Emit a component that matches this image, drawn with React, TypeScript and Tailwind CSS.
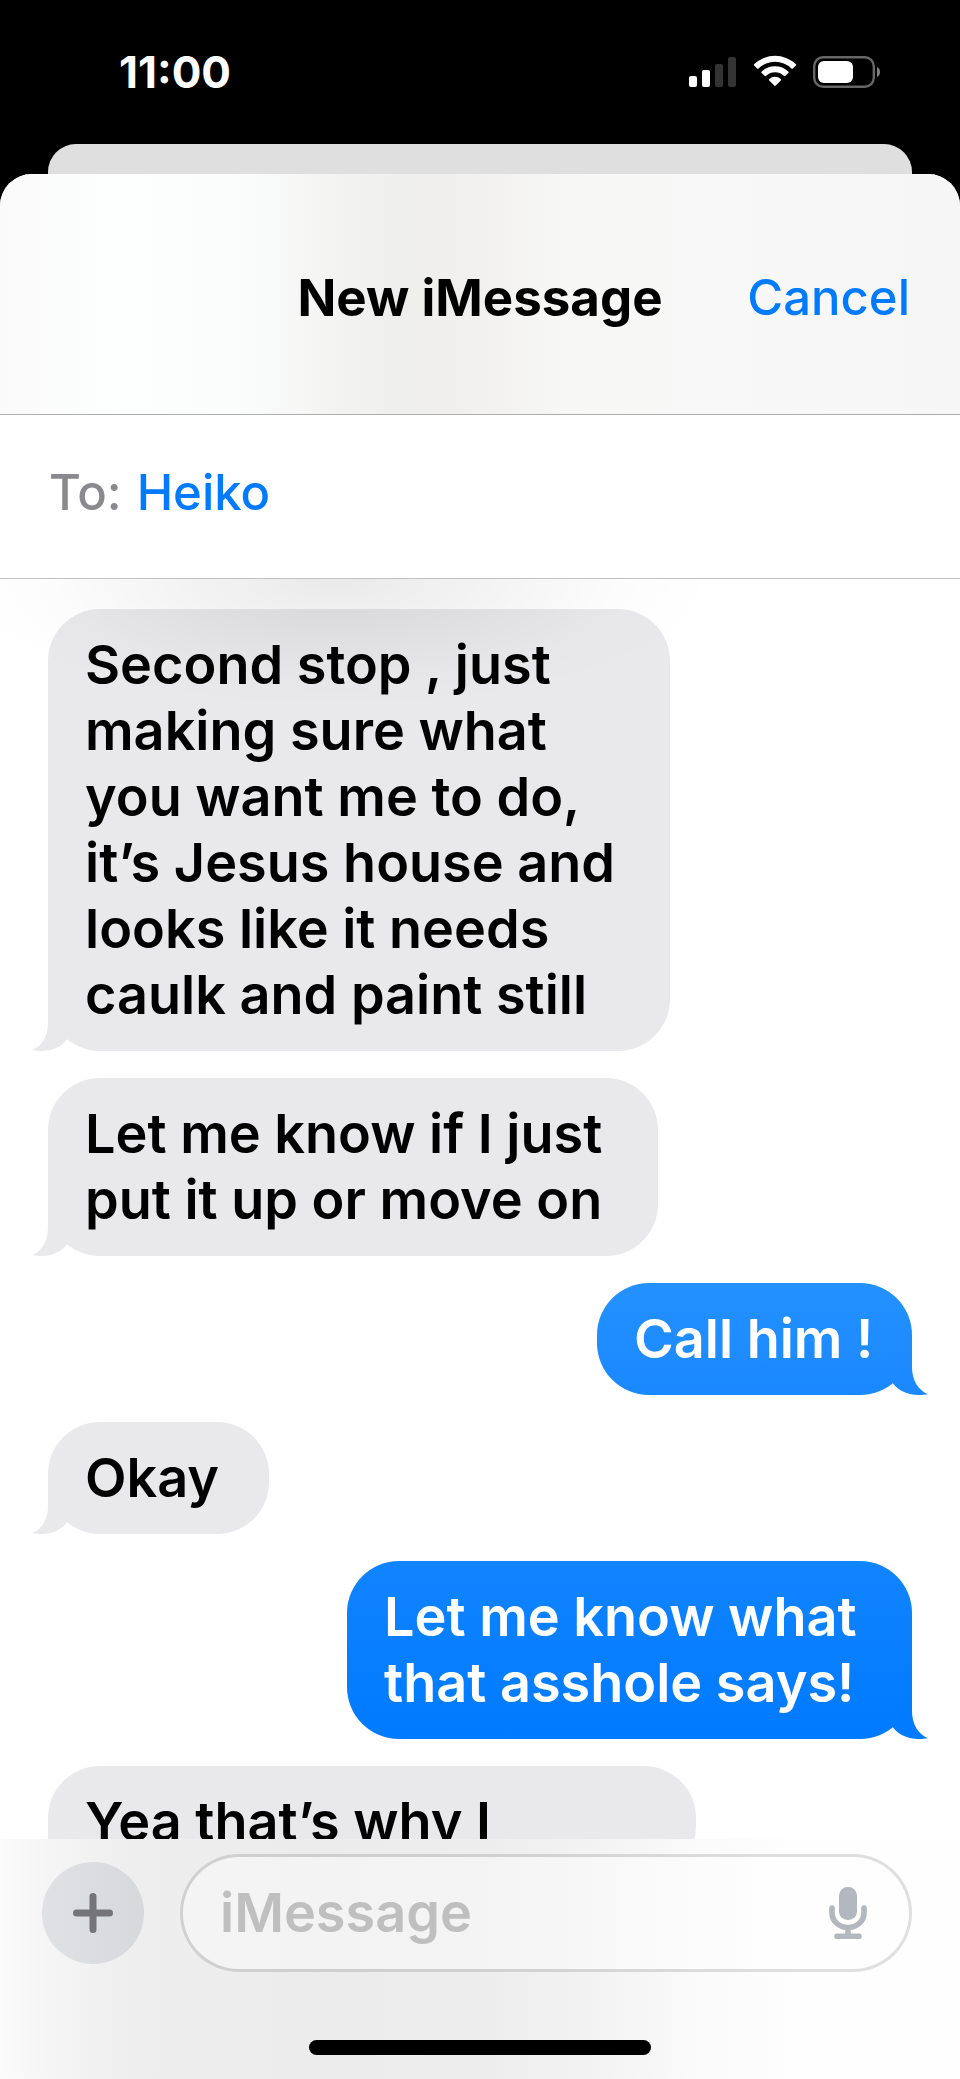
import { useState } from "react";
import clsx from "clsx";

interface Message {
    id: number;
    from: "them" | "me";
    lines: string[];
    className: string;
    // top and bottom colour of the tail
    tail: [string, string];
}

const gray: [string, string] = ["#e9e9eb", "#e9e9eb"];

const messages: Message[] = [
    {
        id: 1,
        from: "them",
        lines: ["Second stop , just", "making sure what", "you want me to do,", "it’s Jesus house and", "looks like it needs", "caulk and paint still"],
        className: "w-[622px]",
        tail: gray
    },
    { id: 2, from: "them", lines: ["Let me know if I just", "put it up or move on"], className: "w-[610px]", tail: gray },
    { id: 3, from: "me", lines: ["Call him !"], className: "w-[315px] from-[#2491ff] to-[#1a88ff]", tail: ["#1f8cff", "#1a88ff"] },
    { id: 4, from: "them", lines: ["Okay"], className: "w-[221px]", tail: gray },
    { id: 5, from: "me", lines: ["Let me know what", "that asshole says!"], className: "w-[565px] from-[#1184ff] to-[#007aff]", tail: ["#057dff", "#007aff"] },
    { id: 6, from: "them", lines: ["Yea that’s why I"], className: "w-[648px]", tail: gray }
];

const StatusBar = () => (
    <div className="flex h-36 shrink-0 items-center justify-between pl-[119px] pr-20 text-white">
        <time className="text-[44px] leading-none font-bold">11:00</time>
        <svg width="192" height="34" viewBox="0 0 192 34" role="img" aria-label="Signal, Wi-Fi and battery">
            {/* signal */}
            <rect x="1" y="21" width="8" height="11" rx="2" fill="#fff" />
            <rect x="14" y="15" width="8" height="17" rx="2" fill="#fff" />
            <rect x="27" y="9" width="8" height="23" rx="2" fill="#333" />
            <rect x="40" y="2" width="8" height="30" rx="2" fill="#333" />
            {/* wifi */}
            <path d="M66.3 10.6a1 1 0 0 1 0-1.5a29.8 29.8 0 0 1 41.4 0a1 1 0 0 1 0 1.5l-2.7 2.8a1.2 1.2 0 0 1-1.6 0a23.7 23.7 0 0 0-32.8 0a1.2 1.2 0 0 1-1.6 0z" fill="#fff" />
            <path d="M73.7 18a1 1 0 0 1 0-1.5a19.4 19.4 0 0 1 26.6 0a1 1 0 0 1 0 1.5l-2.9 2.8a1.2 1.2 0 0 1-1.6 0a12.9 12.9 0 0 0-17.6 0a1.2 1.2 0 0 1-1.6 0z" fill="#fff" />
            <path d="M81.2 25.5a1 1 0 0 1 0-1.6a9 9 0 0 1 11.6 0a1 1 0 0 1 0 1.6l-5 5.1a1.1 1.1 0 0 1-1.6 0z" fill="#fff" />
            {/* battery */}
            <rect x="126.2" y="2.2" width="59.6" height="29.6" rx="9" fill="none" stroke="#666" strokeWidth="2.4" />
            <rect x="130" y="6" width="35" height="22" rx="6" fill="#fff" />
            <path d="M189 12c2 .7 3 2.7 3 5s-1 4.300-3 5z" fill="#808080" />
        </svg>
    </div>
);

const Bubble = ({ message }: { message: Message }) => {
    const mine = message.from === "me";
    const fillId = `tail-${message.id}`;
    return (
        <li
            className={clsx(
                "relative max-w-full rounded-[52px] py-[23px] pl-[37px] text-[54px] leading-[66px] font-semibold whitespace-nowrap",
                mine ? "self-end bg-linear-to-b text-white" : "self-start bg-[#e9e9eb] text-black",
                message.className
            )}
        >
            {message.lines.map((line) => (
                <p key={line}>{line}</p>
            ))}
            <svg
                width="35"
                height="56"
                viewBox="0 0 35 56"
                aria-hidden="true"
                className={clsx("absolute bottom-0", mine ? "-right-4 -scale-x-100" : "-left-4")}
            >
                <linearGradient id={fillId} x1="0" y1="0" x2="0" y2="1">
                    <stop offset="0" stopColor={message.tail[0]} />
                    <stop offset="1" stopColor={message.tail[1]} />
                </linearGradient>
                <path d="M16 0V28C16 41 10 51 0 55.3C3 55.8 6 56 9.5 56C20 56 29 52 35 44.5V0Z" fill={`url(#${fillId})`} />
            </svg>
        </li>
    );
};

export default function App() {
    const [draft, setDraft] = useState("");

    return (
        <div className="flex h-screen flex-col overflow-hidden bg-black font-['Inter','Liberation_Sans',sans-serif]">
            <StatusBar />

            {/* card behind the sheet */}
            <div className="mx-12 h-[70px] shrink-0 rounded-t-[28px] bg-[#dfdfdf]" />

            <main className="-mt-10 flex min-h-0 flex-1 flex-col overflow-hidden rounded-t-[32px] bg-white">
                <header className="grid h-[241px] shrink-0 grid-cols-[1fr_auto_1fr] items-center border-b border-[#adadad] bg-[linear-gradient(90deg,#fafafa_0%,#fdfefe_12%,#fbfdfc_24%,#efefed_41%,#f0efed_47%,#f7f7f6_59%,#f8f8f8_75%,#f6f6f6_100%)] pt-2">
                    <h1 className="col-start-2 text-[51px] leading-[60px] font-bold">New iMessage</h1>
                    <button type="button" className="mr-[50px] justify-self-end text-[49px] leading-[60px] font-medium text-[#007aff]">
                        Cancel
                    </button>
                </header>

                <div className="flex h-[164px] shrink-0 items-center gap-[15px] border-b border-[#c2c2c3] px-[49px] pb-2 text-[49px] leading-[60px] font-medium">
                    <span className="text-[#8a8a8e]">To:</span>
                    <button type="button" className="text-[#007aff]">Heiko</button>
                </div>

                <section className="relative min-h-0 flex-1 overflow-hidden" aria-label="Conversation">
                    <ul className="flex flex-col gap-[27px] px-12 pt-[30px]">
                        {messages.map((message) => (
                            <Bubble key={message.id} message={message} />
                        ))}
                    </ul>
                    {/* soft shade under the header */}
                    <div className="pointer-events-none absolute inset-x-0 top-0 h-48 bg-[radial-gradient(ellipse_380px_130px_at_35%_0%,#00000015,#0000000c_40%,#00000003_75%,transparent)]" />
                </section>

                <footer className="h-60 shrink-0 bg-[linear-gradient(90deg,#fbfbfb_0%,#f5f5f5_5%,#eeeeee_14%,#ececec_32%,#ededed_50%,#f3f3f3_62%,#fbfbfb_74%,#fefefe_84%)] pt-[15px]">
                    <form className="flex items-center gap-9 pr-12 pl-[42px]" onSubmit={(e) => e.preventDefault()}>
                        <button type="button" aria-label="Add" className="flex size-[102px] shrink-0 items-center justify-center rounded-full bg-linear-to-r from-[#e0e1e5] to-[#d7d8da]">
                            <svg width="42" height="42" viewBox="0 0 42 42" aria-hidden="true">
                                <path d="M21 4.500V37.500M4.500 21H37.500" stroke="#747479" strokeWidth="7" strokeLinecap="round" />
                            </svg>
                        </button>
                        <div className="flex h-[118px] min-w-0 flex-1 items-center rounded-full border-3 border-black/12 bg-white/40 bg-clip-padding pr-[42px] pl-[37px]">
                            <input
                                type="text"
                                aria-label="iMessage"
                                placeholder="iMessage"
                                value={draft}
                                onChange={(e) => setDraft(e.target.value)}
                                className="min-w-0 flex-1 bg-transparent text-[54px] leading-[66px] font-semibold outline-none placeholder:text-[#bfbfc0]"
                            />
                            <button type="button" aria-label="Dictate">
                                <svg width="38" height="52" viewBox="0 0 38 52" aria-hidden="true">
                                    <rect x="10" width="18" height="33" rx="8.5" fill="#b3b8c0" />
                                    <path d="M3 21v5a16 14.5 0 0 0 32 0v-5M19 41v8M8 49.2h22" fill="none" stroke="#b3b8c0" strokeWidth="5.6" strokeLinecap="round" />
                                </svg>
                            </button>
                        </div>
                    </form>
                    {/* home indicator */}
                    <div className="mx-auto mt-[68px] h-[15px] w-[342px] rounded-full bg-black" />
                </footer>
            </main>
        </div>
    );
}
